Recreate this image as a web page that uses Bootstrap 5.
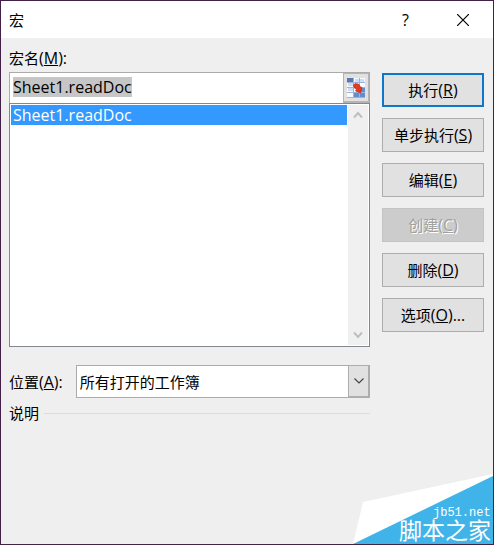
<!DOCTYPE html>
<html lang="zh-CN">
<head>
<meta charset="utf-8">
<meta name="viewport" content="width=device-width, initial-scale=1">
<title>宏</title>
<link rel="stylesheet" href="https://cdn.jsdelivr.net/npm/bootstrap@5.3.0/dist/css/bootstrap.min.css">
<style>
  body { font: 15px/20px "Open Sans", "Noto Sans CJK SC", sans-serif; color: #000; background: #efefef; }
  .dialog-frame { border: 1px solid #42204a; background: #efefef; }
  .title-strip { height: 37px; background: #fff; padding-right: 2px; }
  .title-strip h1 { font-size: 15px; line-height: 20px; }
  .title-strip .btn { width: 57px; --bs-btn-font-size: 16px; }
  .dialog-body { padding: 10px 9px 0 8px; gap: 12px; }
  .btn { --bs-btn-border-radius: 0; --bs-btn-font-size: 15px; --bs-btn-line-height: 20px; --bs-btn-padding-x: 0; --bs-btn-padding-y: 0; --bs-btn-color: #000; }
  .access-key { font-size: 16px; }
  .commands { width: 102px; gap: 11px; padding-top: 25px; }
  .btn-cmd { --bs-btn-bg: #e1e1e1; --bs-btn-border-color: #adadad; --bs-btn-hover-bg: #e5f1fb; --bs-btn-hover-border-color: #0078d7;
    --bs-btn-disabled-bg: #cccccc; --bs-btn-disabled-color: #a0a0a0; --bs-btn-disabled-border-color: #c3c3c3; --bs-btn-disabled-opacity: 1; height: 34px; }
  .btn-cmd:disabled { text-shadow: 1px 1px 0 #fff; }
  .btn-default { border: 2px solid #0f77c9; }
  .name-label { margin-bottom: 4px; }
  .name-box { height: 31px; border: 1px solid #ababab; border-bottom: 0; background: #fff; }
  .name-box input { font-size: 16px; line-height: 20px; color: #000; padding: 0 3px 2px; min-width: 0; outline: 0; }
  .name-box input::selection { background: #c6c6c6; color: #000; }
  .btn-pick { width: 26px; --bs-btn-bg: #e1e1e1; --bs-btn-border-color: #b4b4b4; border-width: 1px 1px 2px; }
  .macro-list { height: 244px; border: 1px solid #828790; background: #fff; padding: 1px; }
  .macro-list .list-group-item { --bs-list-group-item-padding-x: 2px; --bs-list-group-item-padding-y: 0; --bs-list-group-active-bg: #3399ff; font-size: 16px; line-height: 20px; border: 0; }
  .scroll-rail { width: 20px; background: #f0f0f0; margin-left: 1px; }
  .scroll-rail .btn { height: 20px; }
  .place-row { margin-top: 18px; gap: 13px; }
  .place-box { height: 33px; }
  .place-box select { appearance: none; border: 1px solid #ababab; border-radius: 0; background: #fff; color: #000; padding: 0 24px 0 3px; }
  .drop-face { width: 22px; border: 1px solid #adadad; border-width: 1px 2px 2px 1px; background: #e1e1e1; pointer-events: none; }
  .note-row { margin-top: 5px; gap: 5px; }
  .note-line { height: 1px; background: #dcdcdc; }
  .site-logo { width: 140px; height: 70px; }
  .site-logo text { fill: #fff; }
</style>
<script src="https://cdn.jsdelivr.net/npm/bootstrap@5.3.0/dist/js/bootstrap.bundle.min.js"></script>
</head>
<body>
<main class="dialog-frame min-vh-100 position-relative">
  <header class="title-strip d-flex align-items-stretch">
    <h1 class="fw-normal m-0 me-auto ps-2 align-self-center">宏</h1>
    <button class="btn" type="button" aria-label="帮助">?</button>
    <button class="btn" type="button" aria-label="关闭"><svg class="d-block mx-auto" width="12" height="12" viewBox="0 0 12 12" stroke="#000" stroke-width="1.2" fill="none"><path d="M0 0L12 12M12 0L0 12"/></svg></button>
  </header>
  <form class="dialog-body d-flex align-items-start">
    <div class="flex-grow-1">
      <label for="macroName" class="name-label d-block">宏名<span class="access-key">(<u>M</u>):</span></label>
      <div class="name-box d-flex">
        <input id="macroName" class="flex-grow-1 border-0 bg-transparent" type="text" value="Sheet1.readDoc">
        <button class="btn btn-pick" type="button" aria-label="选择区域">
          <svg class="d-block mx-auto" width="18" height="20" viewBox="0 0 18 20">
            <path fill="#f9fbff" d="M0 0H18V20H0z"/>
            <path fill="#5878ae" d="M0 0H7V4H0z"/>
            <path fill="#cbdcf5" d="M1 5H6V8H1zM1 10H6V13H1zM8 1H12V4H8zM13 1H17V4H13z"/>
            <path fill="#628ed0" d="M6 15H18V20H6zM13 10H18V14H13z"/>
            <path fill="none" stroke="#9db3d8" d="M0 4.500H18M0 9.500H18M0 14.500H18M0 19.500H18M6.500 0V20M12.500 0V20"/>
            <path fill="#e33b20" stroke="#b82413" stroke-width=".6" d="M6.500 7L8 5.500L11.500 6L13.500 9L15 9.500L13.500 15L8.500 13L9.500 11.500L7 9.500z"/>
          </svg>
        </button>
      </div>
      <div class="macro-list d-flex">
        <div class="list-group list-group-flush flex-grow-1">
          <button type="button" class="list-group-item list-group-item-action active">Sheet1.readDoc</button>
        </div>
        <div class="scroll-rail d-flex flex-column justify-content-between">
          <button class="btn" type="button" aria-label="向上"><svg class="d-block mx-auto" width="10" height="8" viewBox="0 0 10 8" fill="none" stroke="#bfbfbf" stroke-width="2"><path d="M1 6.500L5 2L9 6.500"/></svg></button>
          <button class="btn" type="button" aria-label="向下"><svg class="d-block mx-auto" width="10" height="8" viewBox="0 0 10 8" fill="none" stroke="#bfbfbf" stroke-width="2"><path d="M1 1.500L5 6L9 1.500"/></svg></button>
        </div>
      </div>
      <div class="place-row d-flex align-items-center">
        <label for="place">位置<span class="access-key">(<u>A</u>):</span></label>
        <div class="place-box position-relative flex-grow-1">
          <select id="place" class="w-100 h-100"><option>所有打开的工作簿</option></select>
          <span class="drop-face position-absolute top-0 end-0 h-100 d-flex align-items-center justify-content-center">
            <svg width="10" height="6" viewBox="0 0 10 6" fill="none" stroke="#444" stroke-width="1.200"><path d="M.5 .5L5 5L9.500 .5"/></svg>
          </span>
        </div>
      </div>
      <div class="note-row d-flex align-items-center">
        <span>说明</span><span class="note-line flex-grow-1"></span>
      </div>
    </div>
    <div class="commands d-flex flex-column flex-shrink-0">
      <button class="btn btn-cmd btn-default" type="button">执行<span class="access-key">(<u>R</u>)</span></button>
      <button class="btn btn-cmd" type="button">单步执行<span class="access-key">(<u>S</u>)</span></button>
      <button class="btn btn-cmd" type="button">编辑<span class="access-key">(<u>E</u>)</span></button>
      <button class="btn btn-cmd" type="button" disabled>创建<span class="access-key">(<u>C</u>)</span></button>
      <button class="btn btn-cmd" type="button">删除<span class="access-key">(<u>D</u>)</span></button>
      <button class="btn btn-cmd" type="button">选项<span class="access-key">(<u>O</u>)...</span></button>
    </div>
  </form>
  <svg class="site-logo position-absolute bottom-0 end-0" viewBox="0 0 140 70" role="img" aria-label="脚本之家">
    <path fill="#fff" d="M0 70L10 28L140 0V70z"/>
    <path fill="#40b4e9" d="M0 70L140 2V70z"/>
    <text x="80" y="42" font-family="Liberation Mono, monospace" font-size="12">jb51.net</text>
    <text x="46" y="65" font-family="Noto Sans CJK SC, sans-serif" font-size="23">脚本之家</text>
  </svg>
</main>
<script>
  document.getElementById('macroName').select();
</script>
</body>
</html>
